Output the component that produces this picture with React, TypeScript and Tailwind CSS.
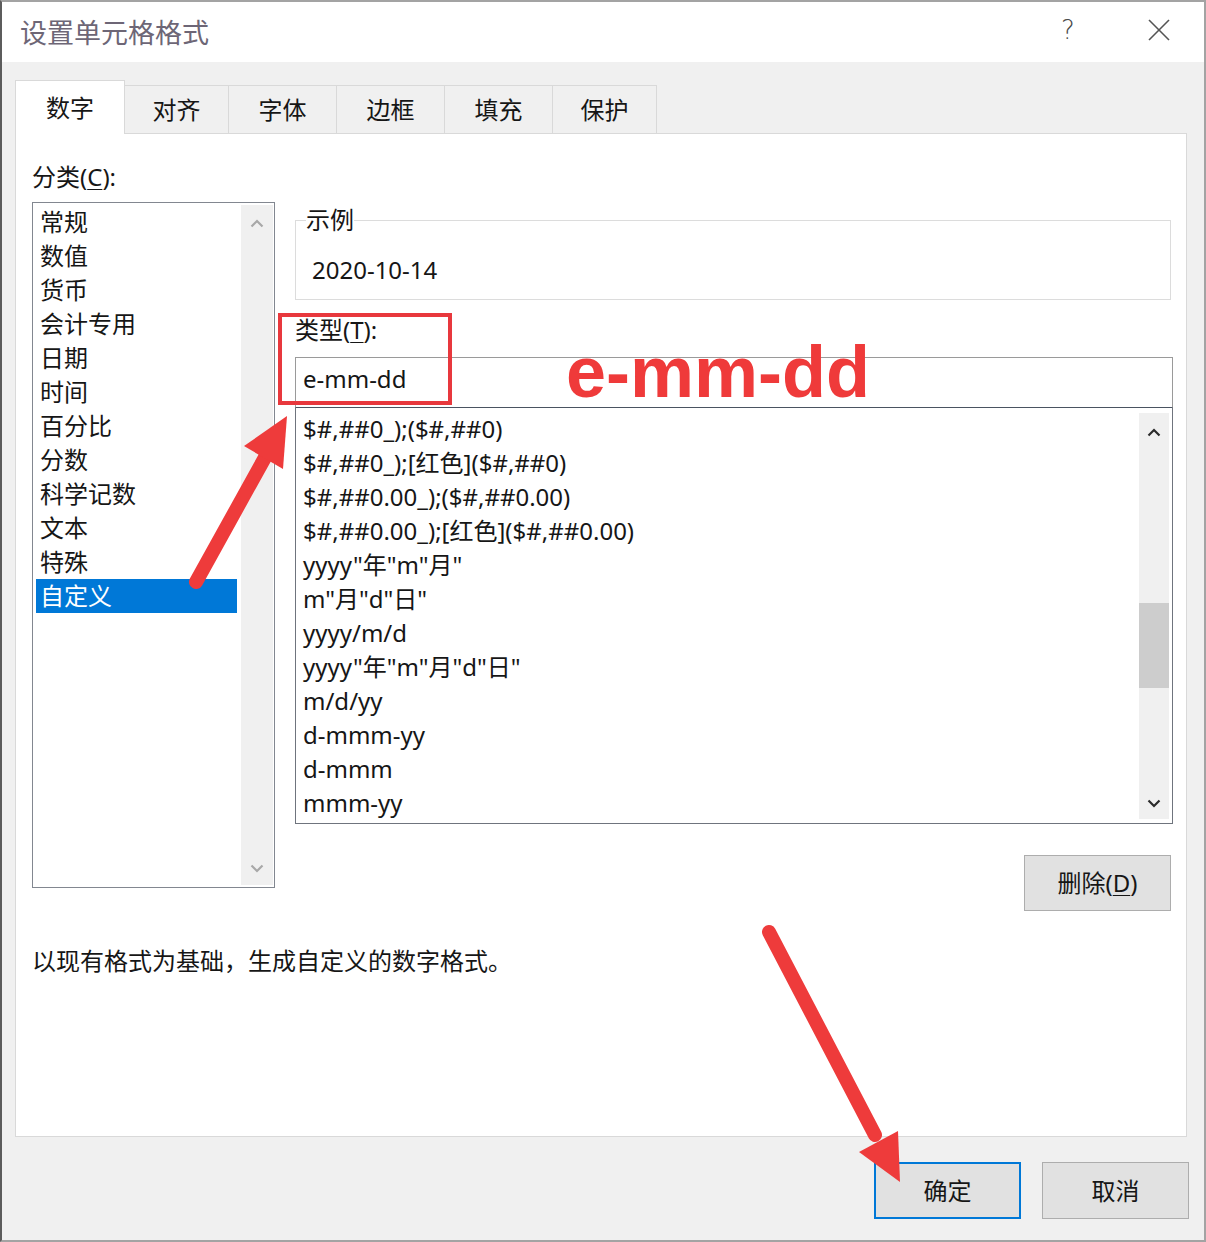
import React from "react";

const categories = ["常规", "数值", "货币", "会计专用", "日期", "时间", "百分比", "分数", "科学记数", "文本", "特殊", "自定义"];
const formats = [
  "$#,##0_);($#,##0)",
  "$#,##0_);[红色]($#,##0)",
  "$#,##0.00_);($#,##0.00)",
  "$#,##0.00_);[红色]($#,##0.00)",
  'yyyy"年"m"月"',
  'm"月"d"日"',
  "yyyy/m/d",
  'yyyy"年"m"月"d"日"',
  "m/d/yy",
  "d-mmm-yy",
  "d-mmm",
  "mmm-yy",
];

const tabs = [
  { label: "对齐", w: "w-[104px]" },
  { label: "字体", w: "w-[108px]" },
  { label: "边框", w: "w-[108px]" },
  { label: "填充", w: "w-[108px]" },
  { label: "保护", w: "w-[104px]" },
];

function Chevron({ up, className }: { up?: boolean; className: string }) {
  return (
    <svg width="14" height="9" viewBox="0 0 14 9" className={className}>
      {up ? (
        <polyline points="1.5,7.5 7,2 12.5,7.5" fill="none" stroke="currentColor" strokeWidth="2.2" />
      ) : (
        <polyline points="1.5,1.5 7,7 12.5,1.5" fill="none" stroke="currentColor" strokeWidth="2.2" />
      )}
    </svg>
  );
}

export default function App() {
  return (
    <div className="relative w-[1206px] h-[1242px] font-['Noto_Sans','Noto_Sans_CJK_SC',sans-serif] text-[#161616]">
      <div className="w-full h-full flex flex-col border-2 border-[#a3a3a3] border-l-[#5c5c5c] bg-[#f0f0f0]">
        {/* Title bar */}
        <div className="h-[60px] bg-white flex items-center pl-[18px] shrink-0">
          <span className="text-[27px] leading-[36px] text-[#6d6676] font-['Noto_Sans_CJK_SC',sans-serif]">设置单元格格式</span>
          <span className="ml-auto w-[24px] text-center text-[26px] leading-[30px] text-[#4a4a4a] font-['DejaVu_Sans',sans-serif] font-light mr-[68px] -mt-[4px]">?</span>
          <svg width="22" height="22" viewBox="0 0 22 22" className="mr-[34px] -mt-[4px]">
            <line x1="1" y1="1" x2="21" y2="21" stroke="#555" strokeWidth="1.6" />
            <line x1="21" y1="1" x2="1" y2="21" stroke="#555" strokeWidth="1.6" />
          </svg>
        </div>

        {/* Body */}
        <div className="flex-1 flex flex-col pl-[13px] pr-[15px] pt-[18px]">
          {/* Tabs */}
          <div className="flex items-end h-[53px]">
            <div className="relative z-10 -mb-px h-[54px] w-[110px] bg-white border-x border-t border-[#d9d9d9] flex items-center justify-center text-[24px] pt-px">
              数字
            </div>
            {tabs.map((t) => (
              <div
                key={t.label}
                className={`h-[48px] ${t.w} border-t border-r border-[#d9d9d9] bg-[#f0f0f0] flex items-center justify-center text-[24px] pt-px`}
              >
                {t.label}
              </div>
            ))}
          </div>

          {/* Panel */}
          <div className="w-[1172px] h-[1004px] bg-white border border-[#d9d9d9] pl-[16px] pt-[26px] shrink-0">
            <div className="flex gap-[20px]">
              {/* Left column */}
              <div className="w-[243px] flex flex-col">
                <div className="h-[34px] leading-[34px] text-[24px]">
                  分类(<span className="underline underline-offset-[3px] decoration-1">C</span>):
                </div>
                <div className="mt-[8px] h-[686px] border border-[#828790] flex">
                  <div className="flex-1 pt-[2px]">
                    {categories.map((c, i) => (
                      <div
                        key={c}
                        className={`ml-[3px] w-[201px] pl-[4px] h-[34px] leading-[34px] text-[24px] ${
                          i === categories.length - 1 ? "bg-[#0078d7] text-white" : ""
                        }`}
                      >
                        {c}
                      </div>
                    ))}
                  </div>
                  <div className="w-[32px] my-[2px] mr-[1px] bg-[#f0f0f0] flex flex-col items-center justify-between pt-[14px] pb-[12px]">
                    <Chevron up className="text-[#a8a8a8]" />
                    <Chevron className="text-[#a8a8a8]" />
                  </div>
                </div>
              </div>

              {/* Right column */}
              <div className="w-[878px] flex flex-col pt-[43px]">
                <fieldset className="w-[876px] h-[97px] border border-[#dcdcdc] pl-[10px]">
                  <legend className="px-0 h-[34px] leading-[34px] text-[24px]">示例</legend>
                  <div className="mt-[16px] pl-[6px] h-[34px] leading-[34px] text-[24px]">2020-10-14</div>
                </fieldset>

                <div className="mt-[13px] h-[34px] leading-[34px] text-[24px]">
                  类型(<span className="underline underline-offset-[3px] decoration-1">T</span>):
                </div>
                <div className="mt-[10px] h-[51px] border border-[#9a9a9a] border-b-[#4a5361] pl-[7px] pb-[7px] flex items-center text-[24px]">
                  e-mm-dd
                </div>
                <div className="h-[416px] border-x border-b border-[#6f747d] flex overflow-hidden">
                  <div className="flex-1 pt-[4px] pl-[7px]">
                    {formats.map((f) => (
                      <div key={f} className="h-[34px] leading-[34px] text-[24px] whitespace-nowrap">
                        {f}
                      </div>
                    ))}
                  </div>
                  <div className="w-[30px] mt-[5px] mb-[4px] mr-[3px] bg-[#f0f0f0] flex flex-col items-center pt-[15px] pb-[11px]">
                    <Chevron up className="text-[#2b2b2b]" />
                    <div className="mt-[166px] w-full h-[85px] bg-[#cdcdcd]" />
                    <div className="flex-1" />
                    <Chevron className="text-[#2b2b2b]" />
                  </div>
                </div>

                <div className="mt-[31px] self-end mr-[2px] w-[147px] h-[56px] bg-[#e1e1e1] border border-[#adadad] flex items-center justify-center text-[24px]">
                  删除(<span className="underline underline-offset-[3px] decoration-1">D</span>)
                </div>
              </div>
            </div>

            <div className="mt-[33px] h-[34px] leading-[34px] text-[24px]">
              以现有格式为基础，生成自定义的数字格式<span className="[font-feature-settings:'halt']">。</span>
            </div>
          </div>

          {/* Bottom buttons */}
          <div className="mt-[25px] flex justify-end gap-[21px]">
            <div className="w-[147px] h-[57px] bg-[#e1e1e1] border-2 border-[#0078d7] flex items-center justify-center text-[24px]">
              确定
            </div>
            <div className="w-[147px] h-[57px] bg-[#e1e1e1] border border-[#adadad] flex items-center justify-center text-[24px]">
              取消
            </div>
          </div>
        </div>
      </div>

      {/* Annotations */}
      <div className="absolute left-[278px] top-[313px] w-[174px] h-[92px] border-[4px] border-[#e8383d]" />
      <div className="absolute left-[566px] top-[336px] text-[72px] leading-[72px] font-bold text-[#ef3a3a] font-['Liberation_Sans',sans-serif] whitespace-nowrap">
        e-mm-dd
      </div>
      <svg className="absolute left-0 top-0 pointer-events-none" width="1206" height="1242" viewBox="0 0 1206 1242">
        <line x1="196" y1="582" x2="268" y2="452" stroke="#ee3b3b" strokeWidth="14" strokeLinecap="round" />
        <polygon points="287,416 283,469 244,446" fill="#ee3b3b" />
        <line x1="769" y1="932" x2="875" y2="1135" stroke="#ee3b3b" strokeWidth="14" strokeLinecap="round" />
        <polygon points="900,1182 898,1131 859,1152" fill="#ee3b3b" />
      </svg>
    </div>
  );
}
